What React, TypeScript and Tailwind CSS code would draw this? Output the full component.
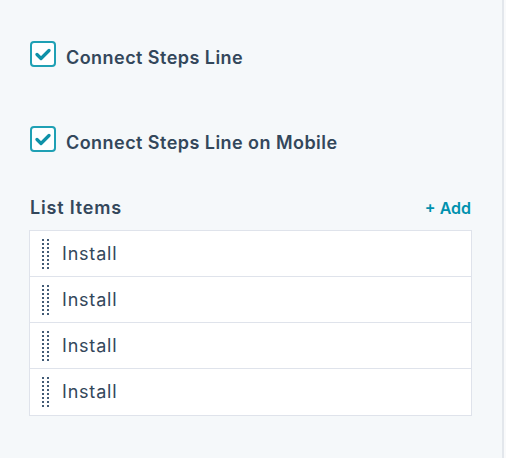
import React from "react";

const Check = ({ label }: { label: string }) => (
  <div className="flex items-center h-[26px] ml-px">
    <div className="w-[26px] h-[26px] rounded-[4px] border-2 border-[#1fa0b4] bg-white flex items-center justify-center">
      <svg width="16" height="13" viewBox="0 0 16 13">
        <path d="M2 6.5 L6 10.5 L14 2.5" fill="none" stroke="#0f91a8" strokeWidth="3.2" strokeLinecap="round" strokeLinejoin="round" />
      </svg>
    </div>
    <span className="ml-[10px] text-[18px] font-semibold tracking-[0.45px] text-[#33475b] leading-none mt-[8px]">{label}</span>
  </div>
);

const Handle = () => (
  <div className="grid grid-cols-2 gap-x-[3px] gap-y-[2px] w-[7px]">
    {Array.from({ length: 16 }).map((_, i) => (
      <div key={i} className="w-[2px] h-[2px] bg-[#425b76]" />
    ))}
  </div>
);

export default function App() {
  return (
    <div className="w-[506px] h-[458px] bg-[#f5f8fa] flex" style={{ fontFamily: "Inter, 'Noto Sans', sans-serif" }}>
      <div className="flex-1 pl-[29px] pr-[30px] pt-[41px] flex flex-col">
        <Check label="Connect Steps Line" />
        <div className="h-[59px]" />
        <Check label="Connect Steps Line on Mobile" />
        <div className="flex items-center justify-between mt-[46px] h-[20px] pl-px pr-px">
          <span className="text-[18px] font-semibold tracking-[0.8px] text-[#33475b] leading-none">List Items</span>
          <span className="text-[16px] font-semibold text-[#0091ae] leading-none">+ Add</span>
        </div>
        <div className="mt-[12px] border border-[#dfe3eb] bg-white">
          {[0, 1, 2, 3].map((i) => (
            <div key={i} className={`h-[46px] flex items-center pl-[12px] ${i < 3 ? "border-b border-[#dfe3eb]" : ""}`}>
              <Handle />
              <span className="ml-[13px] text-[18px] tracking-[0.8px] text-[#33475b] leading-none">Install</span>
            </div>
          ))}
        </div>
      </div>
      <div className="w-[2px] bg-[#e3e7ec]" />
      <div className="w-[2px] bg-[#f9fafb]" />
    </div>
  );
}
